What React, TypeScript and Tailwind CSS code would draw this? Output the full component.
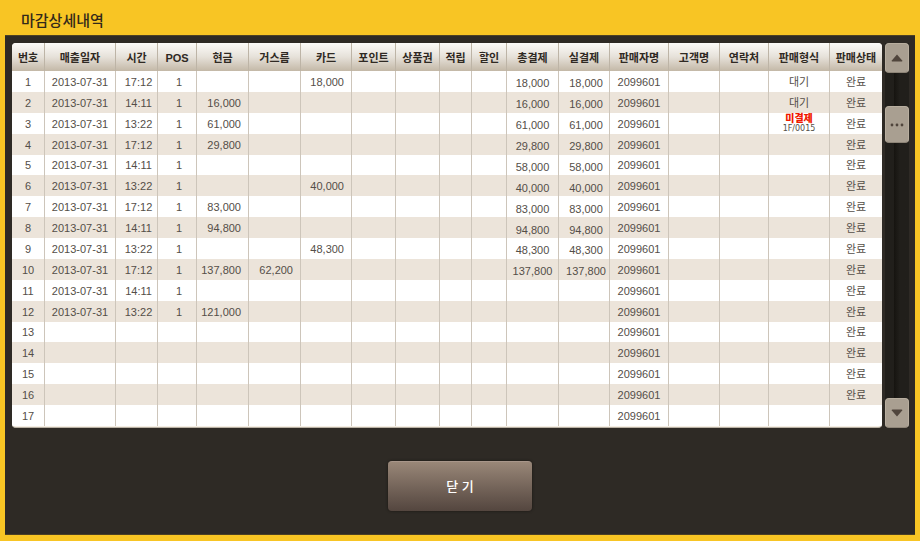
type Sale = {
  date?: string;
  time?: string;
  pos?: string;
  cash?: string;
  change?: string;
  card?: string;
  total?: string;
  kind?: string;
  place?: string;
  status?: string;
};

const DAY = "2013-07-31";
const DONE = "완료";

const sales: Sale[] = [
  { date: DAY, time: "17:12", pos: "1", card: "18,000", total: "18,000", kind: "대기", status: DONE },
  { date: DAY, time: "14:11", pos: "1", cash: "16,000", total: "16,000", kind: "대기", status: DONE },
  { date: DAY, time: "13:22", pos: "1", cash: "61,000", total: "61,000", kind: "미결제", place: "1F/0015", status: DONE },
  { date: DAY, time: "17:12", pos: "1", cash: "29,800", total: "29,800", status: DONE },
  { date: DAY, time: "14:11", pos: "1", total: "58,000", status: DONE },
  { date: DAY, time: "13:22", pos: "1", card: "40,000", total: "40,000", status: DONE },
  { date: DAY, time: "17:12", pos: "1", cash: "83,000", total: "83,000", status: DONE },
  { date: DAY, time: "14:11", pos: "1", cash: "94,800", total: "94,800", status: DONE },
  { date: DAY, time: "13:22", pos: "1", card: "48,300", total: "48,300", status: DONE },
  { date: DAY, time: "17:12", pos: "1", cash: "137,800", change: "62,200", total: "137,800", status: DONE },
  { date: DAY, time: "14:11", pos: "1", status: DONE },
  { date: DAY, time: "13:22", pos: "1", cash: "121,000", status: DONE },
  { status: DONE },
  { status: DONE },
  { status: DONE },
  { status: DONE },
  {},
];

const columns = [
  { label: "번호", width: "w-[33px]" },
  { label: "매출일자", width: "w-[71px]" },
  { label: "시간", width: "w-[42px]" },
  { label: "POS", width: "w-[39px]" },
  { label: "현금", width: "w-[52px]" },
  { label: "거스름", width: "w-[52px]" },
  { label: "카드", width: "w-[51px]" },
  { label: "포인트", width: "w-[44px]" },
  { label: "상품권", width: "w-[44px]" },
  { label: "적립", width: "w-[32px]" },
  { label: "할인", width: "w-[35px]" },
  { label: "총결제", width: "w-[52px]" },
  { label: "실결제", width: "w-[51px]" },
  { label: "판매자명", width: "w-[59px]" },
  { label: "고객명", width: "w-[51px]" },
  { label: "연락처", width: "w-[49px]" },
  { label: "판매형식", width: "w-[61px]" },
  { label: "판매상태", width: "w-[52px]" },
];

const cell = "border-r border-[#cdc5ba] p-0 pt-px text-center last:border-r-0";
const amount = "border-r border-[#cdc5ba] p-0 pt-px pr-[7px] text-right";
const sum = "border-r border-[#cdc5ba] p-0 pt-1 text-center";

function SaleRow({ no, sale }: { no: number; sale: Sale }) {
  return (
    <tr className="h-5 bg-white even:bg-[#ece4da]">
      <td className={cell}>{no}</td>
      <td className={cell}>{sale.date}</td>
      <td className={`${cell} pl-1`}>{sale.time}</td>
      <td className={`${cell} pl-1`}>{sale.pos}</td>
      <td className={amount}>{sale.cash}</td>
      <td className={amount}>{sale.change}</td>
      <td className={amount}>{sale.card}</td>
      <td className={cell} />
      <td className={cell} />
      <td className={cell} />
      <td className={cell} />
      <td className={sum}>{sale.total}</td>
      <td className={`${sum} pl-1`}>{sale.total}</td>
      <td className={cell}>2099601</td>
      <td className={cell} />
      <td className={cell} />
      <td className={cell}>
        {sale.place ? (
          <div className="flex flex-col items-center">
            <strong className="text-[10px] leading-[10px] font-black text-[#f01800]">{sale.kind}</strong>
            <span className="font-['DejaVu_Sans',sans-serif] text-[8px] leading-[9px]">{sale.place}</span>
          </div>
        ) : (
          sale.kind
        )}
      </td>
      <td className={cell}>{sale.status}</td>
    </tr>
  );
}

const knob =
  "flex w-full shrink-0 items-center justify-center rounded-[4px] border border-[#b8ae9f] border-b-[#8d8477] bg-[#a99f91] text-[#50453c]";

export default function App() {
  return (
    <div className="flex min-h-screen flex-col bg-[#f8c524] font-['Liberation_Sans','Noto_Sans_CJK_KR',sans-serif]">
      <header className="flex h-[35px] items-end px-[21px] pb-1">
        <h1 className="text-[15px] leading-5 font-medium text-[#33291a]">마감상세내역</h1>
      </header>

      <main className="mx-[5px] mb-[6px] flex grow flex-col border-y border-[#4d4124] bg-[#2e2a25]">
        <div className="flex gap-[3px] pt-[7px] pr-[6px] pl-[7px]">
          <div className="grow overflow-hidden rounded-[4px] border-b border-[#b9b1a4] bg-[#f5eee4] pb-px">
            <table className="h-[383px] w-full table-fixed border-separate border-spacing-0 text-[11px] leading-4 text-[#544e48]">
              <colgroup>
                {columns.map((c) => (
                  <col key={c.label} className={c.width} />
                ))}
              </colgroup>
              <thead>
                <tr className="h-7">
                  {columns.map((c) => (
                    <th
                      key={c.label}
                      scope="col"
                      className="border-r border-[#bdb4a6] bg-linear-to-b from-[#fcfbf9] via-[#e6e1d9] to-[#c3b8a7] p-0 pt-0.5 text-center text-[11px] font-bold whitespace-nowrap text-[#2f2923] last:border-r-0"
                    >
                      {c.label}
                    </th>
                  ))}
                </tr>
              </thead>
              <tbody>
                {sales.map((sale, i) => (
                  <SaleRow key={i} no={i + 1} sale={sale} />
                ))}
              </tbody>
            </table>
          </div>

          <div className="flex w-6 shrink-0 flex-col bg-linear-to-r from-[#211f1b] from-38% via-[#161410] via-38% to-[#211f1b] to-62%">
            <button type="button" aria-label="위로" className={`${knob} h-[30px]`}>
              <svg viewBox="0 0 12 8" className="h-2 w-3" fill="currentColor">
                <path d="M6 .4 11.2 6.4Q11.6 7.6 10.4 7.6H1.6Q.4 7.6.8 6.4Z" />
              </svg>
            </button>
            <div className="h-[33px]" />
            <button type="button" aria-label="스크롤" className={`${knob} h-[37px]`}>
              <svg viewBox="0 0 14 4" className="h-1 w-3.5" fill="currentColor">
                <circle cx="2" cy="2" r="1.4" />
                <circle cx="7" cy="2" r="1.4" />
                <circle cx="12" cy="2" r="1.4" />
              </svg>
            </button>
            <div className="grow" />
            <button type="button" aria-label="아래로" className={`${knob} h-[30px]`}>
              <svg viewBox="0 0 12 8" className="h-2 w-3" fill="currentColor">
                <path d="M6 7.6 11.2 1.6Q11.6.4 10.4.4H1.6Q.4.4.8 1.6Z" />
              </svg>
            </button>
          </div>
        </div>

        <div className="flex justify-center pt-[33px] pb-[22px]">
          <button
            type="button"
            className="h-[50px] w-36 rounded-[4px] border-t border-[#a8968a] bg-linear-to-b from-[#998778] to-[#54463f] text-[13px] font-medium text-white shadow-[0_0_2px_1px_#24201c]"
          >
            닫 기
          </button>
        </div>
      </main>
    </div>
  );
}
